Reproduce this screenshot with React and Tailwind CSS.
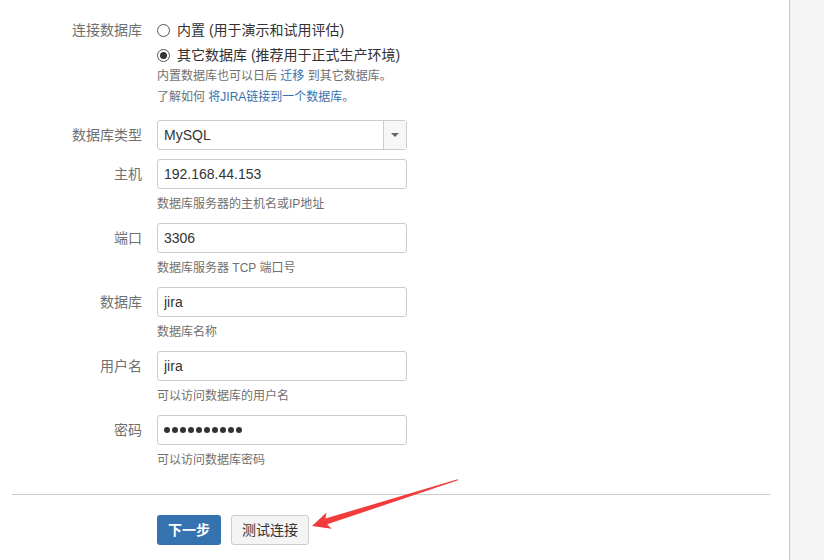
import React from 'react';

const font = { fontFamily: '"Liberation Sans", "Noto Sans CJK SC", sans-serif' };

const Field = ({ label, children, help }) => (
  <div className="flex flex-col">
    <div className="flex items-center">
      <label className="w-[142px] shrink-0 text-right text-[14px] text-[#707070]">{label}</label>
      <div className="ml-[15px]">{children}</div>
    </div>
    {help && (
      <div className="ml-[157px] mt-[6px] h-[18px] text-[12px] leading-[18px] text-[#707070]">{help}</div>
    )}
  </div>
);

const TextInput = ({ value }) => (
  <input
    type="text"
    defaultValue={value}
    readOnly
    className="block h-[30px] w-[250px] rounded-[3px] border border-[#ccc] bg-white px-[6px] text-[14px] text-[#333] outline-none"
    style={font}
  />
);

// masked password value, 10 chars
const PasswordInput = ({ length }) => (
  <div className="flex h-[30px] w-[250px] items-center rounded-[3px] border border-[#ccc] bg-white pl-[6px]">
    {Array.from({ length }).map((_, i) => (
      <span key={i} className="flex w-[8px] shrink-0">
        <span className="h-[6px] w-[6px] rounded-full bg-[#333]" />
      </span>
    ))}
  </div>
);

const Radio = ({ checked, children }) => (
  <div className="flex h-[24px] items-center">
    <span className="flex h-[13px] w-[13px] items-center justify-center rounded-full border border-[#555] bg-white">
      {checked && <span className="h-[7px] w-[7px] rounded-full bg-[#333]" />}
    </span>
    <span className="ml-[7px] text-[14px] text-[#333]">{children}</span>
  </div>
);

const Arrow = () => (
  <svg className="pointer-events-none absolute left-0 top-0" width="824" height="560">
    <g transform="translate(312 526) rotate(-17.6)">
      <polygon
        points="0,0 18,-8.5 15,-3 153,-0.6 153,0.6 15,3 18,8.5"
        fill="#f23c3c"
      />
    </g>
  </svg>
);

export default function App() {
  return (
    <div className="relative flex h-[560px] w-[824px] overflow-hidden bg-white" style={font}>
      <div className="w-[790px] shrink-0 border-r border-[#c8c8c8] bg-white">
        <div className="pt-[18px]">
          <div className="flex">
            <label className="w-[142px] shrink-0 text-right text-[14px] leading-[24px] text-[#707070]">连接数据库</label>
            <div className="ml-[15px] flex flex-col">
              <Radio>内置 (用于演示和试用评估)</Radio>
              <div className="mt-[1px]">
                <Radio checked>其它数据库 (推荐用于正式生产环境)</Radio>
              </div>
              <div className="mt-[-1px] text-[12px] leading-[21px] text-[#707070]">
                内置数据库也可以日后 <span className="text-[#3572b0]">迁移</span> 到其它数据库。
              </div>
              <div className="text-[12px] leading-[21px] text-[#707070]">
                了解如何 <span className="text-[#3572b0]">将JIRA链接到一个数据库</span>。
              </div>
            </div>
          </div>

          <div className="mt-[12px]">
            <Field label="数据库类型">
              <div className="flex h-[30px] w-[250px] items-stretch rounded-[3px] border border-[#ccc] bg-white">
                <div className="flex flex-1 items-center px-[6px] text-[14px] text-[#333]">MySQL</div>
                <div className="flex w-[23px] items-center justify-center border-l border-[#ccc] bg-[#f7f7f7]">
                  <span className="h-0 w-0 border-x-[4px] border-t-[4px] border-x-transparent border-t-[#666]" />
                </div>
              </div>
            </Field>
          </div>

          <div className="mt-[9px]">
            <Field label="主机" help="数据库服务器的主机名或IP地址">
              <TextInput value="192.168.44.153" />
            </Field>
          </div>
          <div className="mt-[10px]">
            <Field label="端口" help="数据库服务器 TCP 端口号">
              <TextInput value="3306" />
            </Field>
          </div>
          <div className="mt-[10px]">
            <Field label="数据库" help="数据库名称">
              <TextInput value="jira" />
            </Field>
          </div>
          <div className="mt-[10px]">
            <Field label="用户名" help="可以访问数据库的用户名">
              <TextInput value="jira" />
            </Field>
          </div>
          <div className="mt-[10px]">
            <Field label="密码" help="可以访问数据库密码">
              <PasswordInput length={10} />
            </Field>
          </div>

          <div className="ml-[12px] mt-[25px] h-px w-[758px] bg-[#cccccc]" />

          <div className="ml-[157px] mt-[20px] flex gap-[10px]">
            <button className="h-[30px] w-[64px] rounded-[3px] bg-[#3572b0] text-[14px] font-bold text-white">下一步</button>
            <button className="h-[30px] w-[78px] rounded-[3px] border border-[#ccc] bg-[#f4f4f4] text-[14px] text-[#333]">测试连接</button>
          </div>
        </div>
      </div>
      <div className="flex-1 bg-[#f5f5f5]" />
      <Arrow />
    </div>
  );
}
